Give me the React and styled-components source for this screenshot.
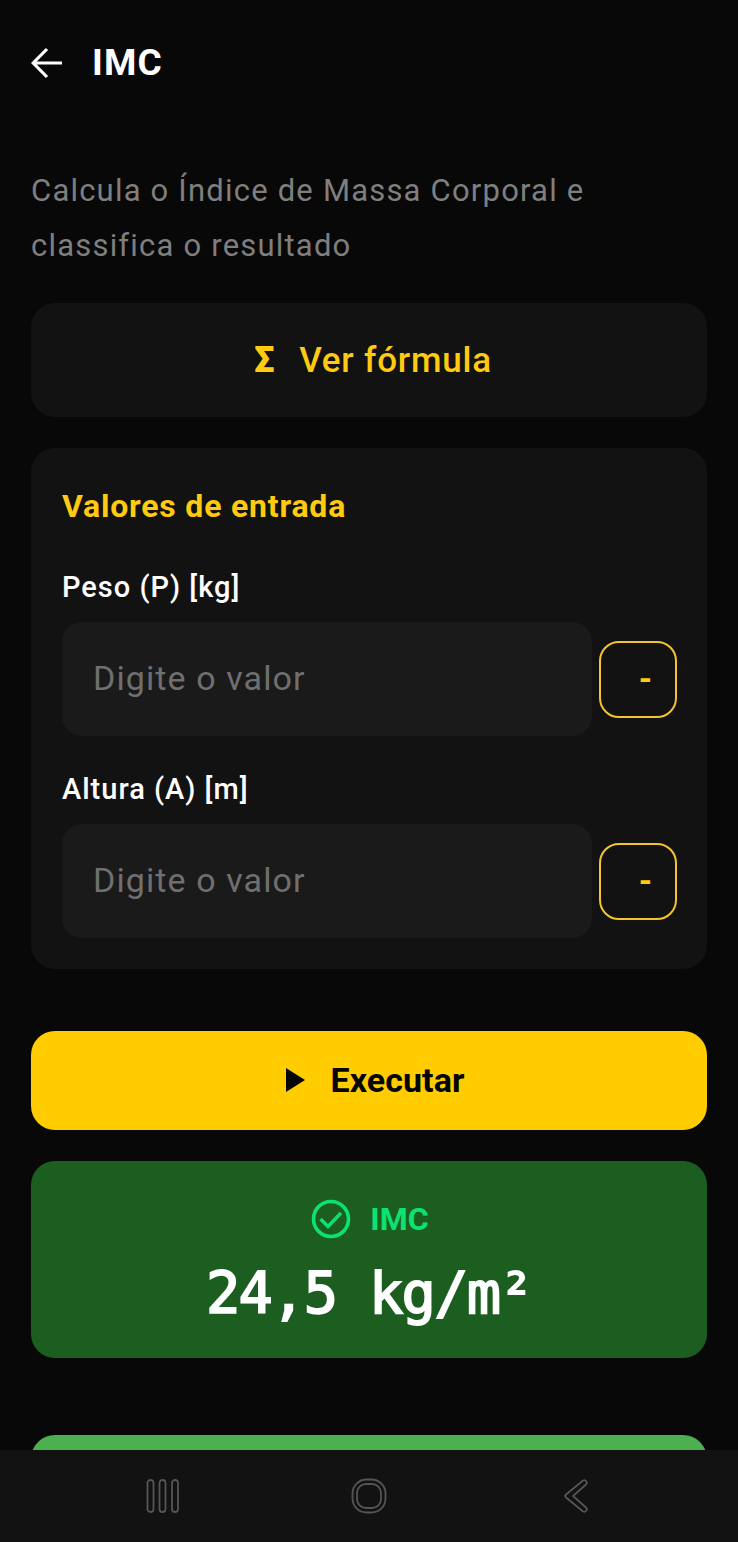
import React from "react";
import styled, { createGlobalStyle } from "styled-components";

const Global = createGlobalStyle`
  html, body { margin: 0; padding: 0; background: #080808; }
  * { box-sizing: border-box; }
`;

const Screen = styled.div`
  width: 738px;
  height: 1542px;
  display: flex;
  flex-direction: column;
  background: #080808;
  font-family: Roboto, "Liberation Sans", sans-serif;
  overflow: hidden;
`;

const Scroll = styled.main`
  flex: 1;
  min-height: 0;
  overflow: hidden;
  padding: 0 31px;
  display: flex;
  flex-direction: column;
`;

const Header = styled.header`
  height: 125px;
  display: flex;
  align-items: center;
  gap: 30px;
  flex-shrink: 0;
`;

const Title = styled.h1`
  margin: 0;
  font-size: 37px;
  font-weight: 700;
  line-height: 1;
  letter-spacing: 1.1px;
  color: #fff;
`;

const Description = styled.p`
  margin: 38px 0 30px;
  font-size: 31px;
  line-height: 55px;
  letter-spacing: 1.2px;
  color: #7f7f7f;
`;

const FormulaButton = styled.button`
  flex-shrink: 0;
  height: 114px;
  border: 0;
  border-radius: 24px;
  background: #121212;
  color: #ffca0f;
  font: 500 35px Roboto, sans-serif;
  letter-spacing: 0.8px;
  display: flex;
  align-items: center;
  justify-content: center;
  gap: 24px;
  padding: 0 0 0 8px;
`;

const Sigma = styled.span`
  font-weight: 900;
  font-size: 36px;
`;

const Card = styled.section`
  flex-shrink: 0;
  margin-top: 31px;
  height: 521px;
  padding: 40px 30px 31px 31px;
  border-radius: 24px;
  background: #121212;
  display: flex;
  flex-direction: column;
`;

const CardTitle = styled.h2`
  margin: 0 0 47px;
  font-size: 32px;
  line-height: 36px;
  font-weight: 700;
  letter-spacing: 0.8px;
  color: #ffca0f;
`;

const Field = styled.div`
  display: flex;
  flex-direction: column;
  gap: 17px;
  & + & { margin-top: 37px; }
`;

const Label = styled.label`
  font-size: 29px;
  line-height: 32px;
  padding-bottom: 2px;
  font-weight: 500;
  letter-spacing: 1px;
  color: #fff;
`;

const InputRow = styled.div`
  display: flex;
  align-items: center;
  gap: 7px;
`;

const Input = styled.input`
  flex: 1;
  min-width: 0;
  height: 114px;
  padding: 0 31px 2px;
  border: 0;
  border-radius: 20px;
  background: #1a1a1a;
  font: 400 34px Roboto, sans-serif;
  letter-spacing: 1.1px;
  color: #fff;
  &::placeholder { color: #6f6f6f; opacity: 1; }
`;

const UnitButton = styled.button`
  width: 78px;
  height: 77px;
  flex-shrink: 0;
  border: 2px solid #f2c52c;
  border-radius: 20px;
  background: transparent;
  color: #ffca0f;
  font: 700 34px Roboto, sans-serif;
  padding: 0 0 3px 15px;
`;

const RunButton = styled.button`
  flex-shrink: 0;
  margin-top: 62px;
  height: 99px;
  border: 0;
  border-radius: 24px;
  background: #ffcc00;
  color: #050505;
  font: 700 34px Roboto, sans-serif;
  letter-spacing: 0.1px;
  display: flex;
  align-items: center;
  justify-content: center;
  gap: 25px;
  padding: 0 0 2px 13px;
`;

const Result = styled.section`
  flex-shrink: 0;
  margin-top: 31px;
  height: 197px;
  border-radius: 24px;
  background: #1b5e20;
  display: flex;
  flex-direction: column;
  align-items: center;
  padding-top: 38px;
`;

const ResultHead = styled.div`
  display: flex;
  align-items: center;
  gap: 19px;
  height: 40px;
  padding-left: 2px;
  color: #0ce272;
  font-size: 32px;
  font-weight: 700;
`;

const ResultValue = styled.div`
  margin-top: 19px;
  font-family: "DejaVu Sans Mono", "Liberation Mono", monospace;
  font-size: 57px;
  line-height: 70px;
  font-weight: 400;
  letter-spacing: -1.7px;
  -webkit-text-stroke: 1.8px #fff;
  color: #fff;
`;

const NextCard = styled.div`
  flex-shrink: 0;
  margin-top: 77px;
  height: 100px;
  border-radius: 24px;
  background: #4caf50;
`;

const NavBar = styled.nav`
  flex-shrink: 0;
  height: 92px;
  background: #121212;
  display: grid;
  grid-template-columns: 326px 86px 326px;
  align-items: center;
  justify-items: center;
`;

const NavIcon = styled.svg`
  display: block;
  fill: none;
  stroke: #555;
  stroke-width: 1.8;
`;

export default function App() {
  return (
    <Screen>
      <Global />
      <Scroll>
        <Header>
          <svg width="31" height="32" viewBox="0 0 31 32" fill="none" stroke="#fff" strokeWidth="3.2">
            <path d="M31 16H3M16 2 2.2 16 16 30" />
          </svg>
          <Title>IMC</Title>
        </Header>
        <Description>
          Calcula o Índice de Massa Corporal e classifica o resultado
        </Description>
        <FormulaButton>
          <Sigma>Σ</Sigma>
          Ver fórmula
        </FormulaButton>
        <Card>
          <CardTitle>Valores de entrada</CardTitle>
          <Field>
            <Label>Peso (P) [kg]</Label>
            <InputRow>
              <Input placeholder="Digite o valor" />
              <UnitButton>-</UnitButton>
            </InputRow>
          </Field>
          <Field>
            <Label>Altura (A) [m]</Label>
            <InputRow>
              <Input placeholder="Digite o valor" />
              <UnitButton>-</UnitButton>
            </InputRow>
          </Field>
        </Card>
        <RunButton>
          <svg width="19" height="24" viewBox="0 0 19 24" fill="#050505">
            <path d="M0 0 19 12 0 24Z" />
          </svg>
          Executar
        </RunButton>
        <Result>
          <ResultHead>
            <svg width="40" height="40" viewBox="0 0 40 40" fill="none" stroke="#0ce272">
              <circle cx="20" cy="20" r="17.5" strokeWidth="3.6" />
              <path d="M9.5 20 17 27.5 30 14" strokeWidth="3.4" />
            </svg>
            IMC
          </ResultHead>
          <ResultValue>24,5 kg/m²</ResultValue>
        </Result>
        <NextCard />
      </Scroll>
      <NavBar>
        <NavIcon width="34" height="36" viewBox="0 0 34 36">
          <rect x="1.5" y="2" width="6" height="32" rx="3" />
          <rect x="13.5" y="2" width="6" height="32" rx="3" />
          <rect x="26" y="2" width="6" height="32" rx="3" />
        </NavIcon>
        <NavIcon width="36" height="36" viewBox="0 0 36 36">
          <rect x="1.5" y="1.5" width="33" height="33" rx="14" />
          <rect x="6" y="6" width="24" height="24" rx="9" />
        </NavIcon>
        <NavIcon width="28" height="36" viewBox="0 0 28 36">
          <path d="M22 2.5 Q24 1.5 25.5 3.5 Q26.5 5 25 6.5 L12 18 L25 29.5 Q26.5 31 25.5 32.5 Q24 34.5 22 33.5 L5 19.5 Q3.5 18 5 16.5 Z" />
        </NavIcon>
      </NavBar>
    </Screen>
  );
}
